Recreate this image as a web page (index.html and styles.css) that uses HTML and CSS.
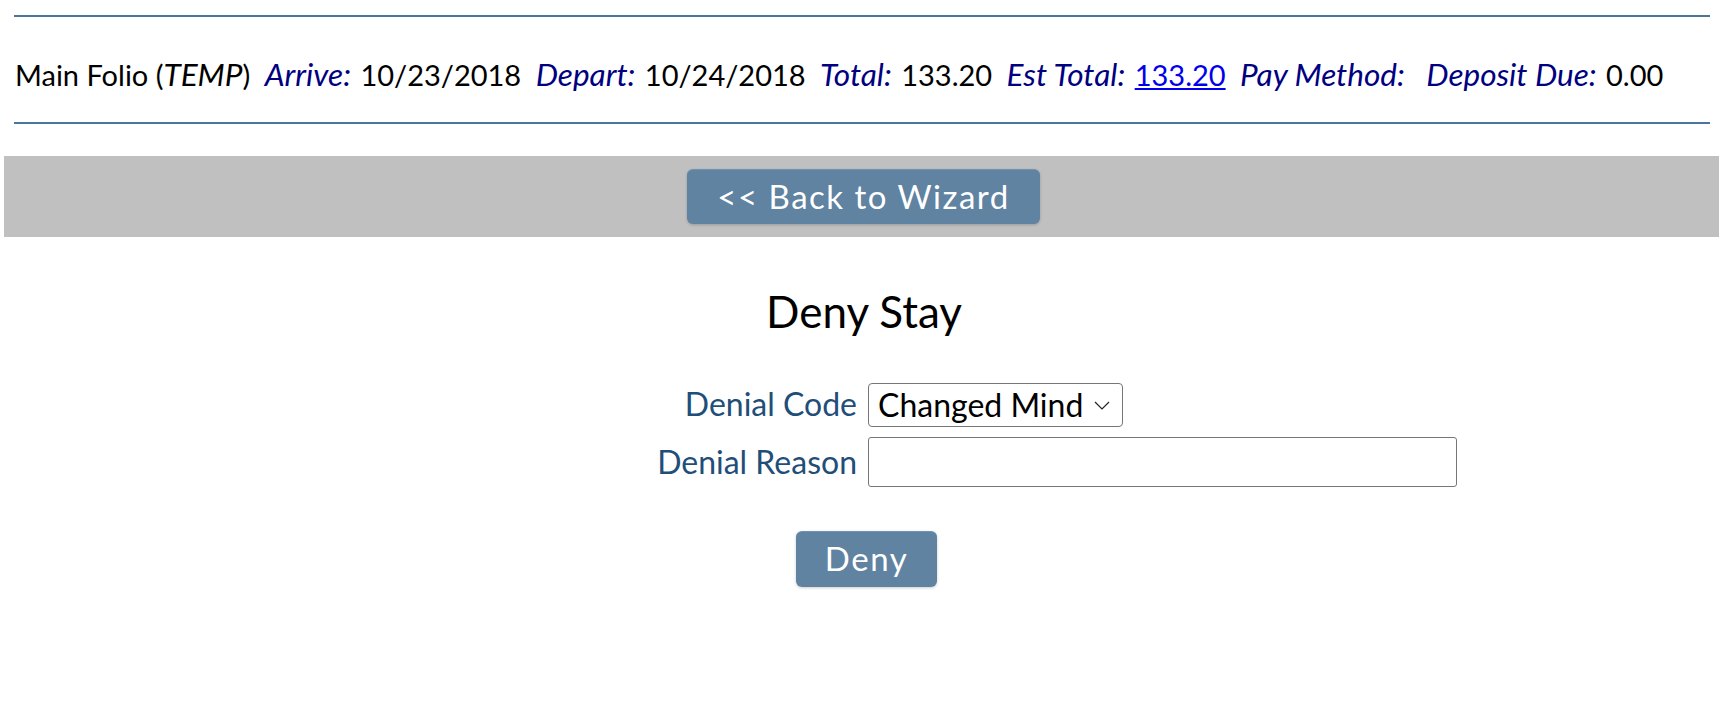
FILE: index.html
```html
<!DOCTYPE html>
<html lang="en">
<head>
    <meta charset="utf-8">
    <title>Deny Stay</title>
    <link rel="stylesheet" href="styles.css">
</head>
<body>
<div class="folio">
    <span class="item">Main Folio (<i>TEMP</i>)</span>
    <span class="item"><span class="lbl">Arrive:</span> 10/23/2018</span>
    <span class="item"><span class="lbl">Depart:</span> 10/24/2018</span>
    <span class="item"><span class="lbl">Total:</span> 133.20</span>
    <span class="item"><span class="lbl">Est Total:</span> <a href="#">133.20</a></span>
    <span class="item empty"><span class="lbl">Pay Method:</span> </span>
    <span class="item"><span class="lbl">Deposit Due:</span> 0.00</span>
</div>
<div class="toolbar">
    <a class="btn btn-back" href="#">&lt;&lt; Back to Wizard</a>
</div>
<div class="content">
    <h2>Deny Stay</h2>
    <table class="form" cellspacing="0" cellpadding="0">
        <tr>
            <td class="label">Denial Code</td>
            <td>
                <span class="select-wrap">
                    <select id="denialCode">
                        <option>Changed Mind</option>
                    </select>
                    <svg class="chevron" width="16" height="9" viewBox="0 0 16 9"><path d="M1 1l7 7 7-7" fill="none" stroke="#222" stroke-width="1.2"/></svg>
                </span>
            </td>
        </tr>
        <tr>
            <td class="label">Denial Reason</td>
            <td><input type="text" id="denialReason"></td>
        </tr>
    </table>
    <div class="actions">
        <a class="btn btn-deny" href="#">Deny</a>
    </div>
</div>
</body>
</html>
```

FILE: styles.css
```css
* {
    margin: 0;
    padding: 0;
    box-sizing: border-box;
}
html,body {
    height: 100%;
}
body {
    font-family: Lato, "Liberation Sans", sans-serif;
    font-size: 29px;
    color: #000;
    background-color: #fff;
}
.folio {
    margin: 15px 18px 0 14px;
    padding: 39px 0 29px 1px;
    border-top: 2px solid #4a759c;
    border-bottom: 2px solid #4a759c;
    line-height: 36px;
    white-space: nowrap;
}
.folio .item {
    margin-right: 7px;
}
.folio .item.empty {
    margin-right: 12px;
}
.folio i,
.folio .lbl {
    font-size: 31.5px;
}
.folio .lbl {
    font-style: italic;
    color: #000080;
    margin-right: 2px;
}
.folio a {
    color: #0000ee;
}
.toolbar {
    display: flex;
    justify-content: center;
    margin: 32px 9px 0 4px;
    padding: 13px 0;
    background-color: #c0c0c0;
}
.btn {
    display: block;
    background-color: #5f83a1;
    color: #fff;
    text-align: center;
    text-decoration: none;
    font-size: 33px;
    letter-spacing: 1.5px;
    border-radius: 6px;
    box-shadow: 0 1px 3px rgba(0,0,0,0.2);
    border-top: 1px solid #7193b0;
}
.btn-back {
    width: 353px;
    height: 55px;
    line-height: 52px;
    margin-left: 4px;
}
.content {
    text-align: center;
}
.content h2 {
    font-weight: normal;
    font-size: 44px;
    line-height: 52px;
    margin-top: 48px;
}
.form {
    width: 100%;
    margin-top: 39px;
    text-align: left;
    font-size: 32px;
}
.form td {
    width: 50%;
    vertical-align: middle;
    padding: 5px 0 5px 4px;
}
.form td.label {
    text-align: right;
    color: #1f4e79;
    padding: 5px 7px 5px 0;
}
.select-wrap {
    position: relative;
    display: inline-block;
    vertical-align: middle;
}
.form select {
    display: block;
    -webkit-appearance: none;
    appearance: none;
    font-family: inherit;
    font-size: 32px;
    width: 255px;
    height: 44px;
    padding: 0 0 0 9px;
    border: 1px solid #767676;
    border-radius: 4px;
    background-color: #fff;
    color: #000;
}
.chevron {
    position: absolute;
    right: 13px;
    top: 18px;
    pointer-events: none;
}
.form input {
    display: block;
    font-family: inherit;
    font-size: 32px;
    width: 589px;
    height: 50px;
    border: 1px solid #767676;
    border-radius: 3px;
}
.actions {
    display: flex;
    justify-content: center;
    margin-top: 39px;
}
.btn-deny {
    width: 141px;
    height: 56px;
    line-height: 53px;
    margin-left: 5px;
}
```
